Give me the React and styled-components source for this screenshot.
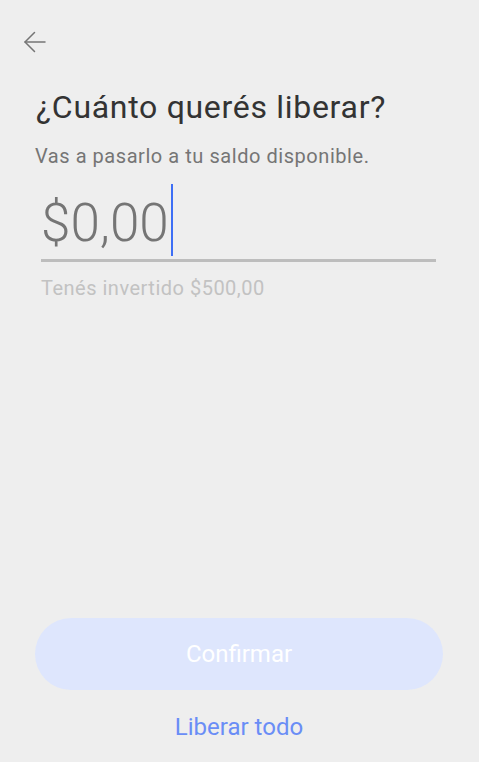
import styled, { createGlobalStyle } from "styled-components";

const GlobalStyle = createGlobalStyle`
  html, body {
    margin: 0;
    padding: 0;
    background: #eeeeee;
  }
  body {
    font-family: Roboto, "Noto Sans", "Liberation Sans", sans-serif;
  }
`;

const Screen = styled.div`
  display: flex;
  flex-direction: column;
  min-height: 100vh;
  box-sizing: border-box;
  background: #eeeeee;
  padding-bottom: 21px;
`;

const TopBar = styled.div`
  display: flex;
  align-items: center;
  height: 24px;
  padding: 30px 0 0 23px;
`;

const BackButton = styled.button`
  display: flex;
  align-items: center;
  justify-content: center;
  width: 24px;
  height: 24px;
  padding: 0;
  border: none;
  background: transparent;
  color: #757575;
  cursor: pointer;
`;

const Content = styled.div`
  display: flex;
  flex-direction: column;
  padding: 34px 36px 0 35px;
`;

const Title = styled.h1`
  margin: 0 0 0 1px;
  font-size: 32px;
  line-height: 38px;
  font-weight: 400;
  letter-spacing: 0.7px;
  color: #333333;
`;

const Subtitle = styled.p`
  margin: 18px 0 0;
  font-size: 20px;
  line-height: 24px;
  letter-spacing: 0.55px;
  color: #757575;
`;

const AmountField = styled.div`
  display: flex;
  flex-direction: column;
  margin: 16px 7px 0 6px;
`;

const AmountRow = styled.div`
  display: flex;
  align-items: flex-start;
  border-bottom: 3px solid #bdbdbd;
`;

const Amount = styled.span`
  margin-top: 4px;
  font-size: 53px;
  line-height: 71px;
  font-weight: 300;
  color: #757575;
`;

const Caret = styled.span`
  width: 2px;
  height: 72px;
  margin-left: 2px;
  background: #3d6ef5;
`;

const Hint = styled.div`
  margin-top: 14px;
  font-size: 20px;
  line-height: 24px;
  letter-spacing: 0.5px;
  color: #c2c2c2;
`;

const Footer = styled.div`
  display: flex;
  flex-direction: column;
  align-items: center;
  margin-top: auto;
  padding: 0 36px 0 35px;
  gap: 23px;
`;

const PrimaryButton = styled.button`
  width: 100%;
  height: 72px;
  border: none;
  border-radius: 36px;
  background: #dee6fd;
  color: #ffffff;
  font-family: inherit;
  font-size: 24px;
  font-weight: 400;
`;

const LinkButton = styled.button`
  padding: 0;
  border: none;
  background: transparent;
  color: #6a8df6;
  font-family: inherit;
  font-size: 24px;
  line-height: 28px;
  cursor: pointer;
`;

const ArrowLeft = () => (
  <svg width="24" height="24" viewBox="0 0 24 24" fill="none" stroke="currentColor" strokeWidth="1.5" strokeLinecap="round" strokeLinejoin="round">
    <path d="M22 12H2" />
    <path d="M11.5 2.5L2 12l9.5 9.5" />
  </svg>
);

export default function App() {
  return (
    <>
      <GlobalStyle />
      <Screen>
        <TopBar>
          <BackButton aria-label="Volver">
            <ArrowLeft />
          </BackButton>
        </TopBar>
        <Content>
          <Title>¿Cuánto querés liberar?</Title>
          <Subtitle>Vas a pasarlo a tu saldo disponible.</Subtitle>
          <AmountField>
            <AmountRow>
              <Amount>$0,00</Amount>
              <Caret />
            </AmountRow>
            <Hint>Tenés invertido $500,00</Hint>
          </AmountField>
        </Content>
        <Footer>
          <PrimaryButton disabled>Confirmar</PrimaryButton>
          <LinkButton>Liberar todo</LinkButton>
        </Footer>
      </Screen>
    </>
  );
}
